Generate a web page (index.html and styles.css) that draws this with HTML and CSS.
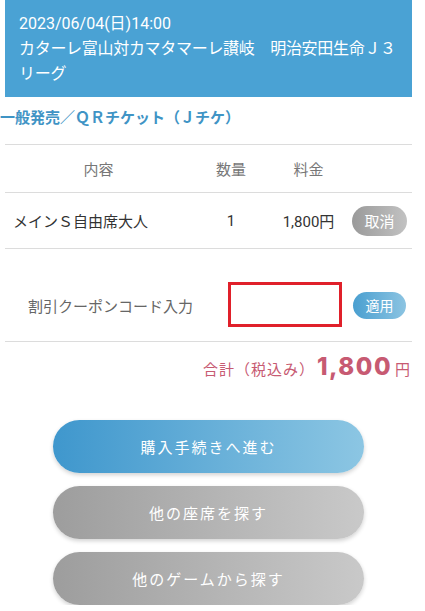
FILE: index.html
```html
<!DOCTYPE html>
<html lang="ja">
<head>
<meta charset="utf-8">
<link rel="stylesheet" href="styles.css">
</head>
<body>
<div class="page">
  <header class="event">
    <div class="event-date">2023/06/04(日)14:00</div>
    <div class="event-title">カターレ富山対カマタマーレ讃岐　明治安田生命Ｊ３リーグ</div>
  </header>
  <h2 class="sale">一般発売／ＱＲチケット（Ｊチケ）</h2>
  <div class="table">
    <div class="row head">
      <div class="c-name">内容</div>
      <div class="c-qty">数量</div>
      <div class="c-price">料金</div>
      <div class="c-act"></div>
    </div>
    <div class="row item">
      <div class="c-name left">メインＳ自由席大人</div>
      <div class="c-qty">1</div>
      <div class="c-price">1,800円</div>
      <div class="c-act"><span class="pill gray">取消</span></div>
    </div>
    <div class="row coupon">
      <div class="coupon-label">割引クーポンコード入力</div>
      <div class="coupon-input"></div>
      <span class="pill blue">適用</span>
    </div>
  </div>
  <div class="total">
    <span class="total-label">合計（税込み）</span><span class="total-num">1,800</span><span class="total-yen">円</span>
  </div>
  <div class="actions">
    <button class="btn primary">購入手続きへ進む</button>
    <button class="btn secondary">他の座席を探す</button>
    <button class="btn secondary">他のゲームから探す</button>
  </div>
</div>
</body>
</html>
```
FILE: styles.css
```css
* { box-sizing: border-box; }
html, body { margin: 0; padding: 0; background: #fff; }
body {
  font-family: Roboto, "Noto Sans CJK JP", sans-serif;
  color: #333;
}
.page { width: 425px; }
.event {
  margin-left: 5px;
  width: 407px;
  height: 97px;
  background: #4aa2d4;
  color: #fff;
  padding: 11px 4px 0 14px;
  font-size: 16px;
  line-height: 25px;
}
.event-title { letter-spacing: -0.3px; }
.sale {
  margin: 0;
  padding: 9px 0 0 0;
  height: 47px;
  font-size: 15px;
  line-height: 24px;
  color: #3f94c5;
  font-weight: bold;
}
.table {
  margin-left: 5px;
  width: 407px;
}
.row {
  display: flex;
  align-items: center;
  border-top: 1px solid #dcdcdc;
}
.row.head { height: 48px; color: #777; font-size: 15px; }
.row.item { height: 56px; font-size: 15px; color: #333; }
.row.coupon {
  height: 94px;
  border-bottom: 1px solid #dcdcdc;
  padding-top: 20px;
}
.c-name { width: 187px; text-align: center; }
.c-name.left { text-align: left; padding-left: 8px; letter-spacing: 0; }
.c-qty { width: 78px; text-align: center; }
.c-price { width: 77px; text-align: center; }
.c-act { flex: 1; display: flex; justify-content: flex-start; padding-left: 5px; }
.pill {
  display: inline-flex;
  align-items: center;
  justify-content: center;
  color: #fff;
  border-radius: 16px;
}
.pill.gray {
  width: 55px;
  height: 30px;
  font-size: 15px;
  background: linear-gradient(90deg, #9a9a9a, #c2c2c2);
}
.pill.blue {
  width: 53px;
  height: 27px;
  font-size: 14px;
  margin-left: 11px;
  background: linear-gradient(90deg, #4a9fd0, #8cc4e2);
}
.coupon-label {
  width: 223px;
  padding-left: 23px;
  font-size: 15px;
  color: #666;
  letter-spacing: 0;
}
.coupon-input {
  width: 114px;
  height: 45px;
  border: 3px solid #e0202a;
  margin-top: -2px;
}
.total {
  display: flex;
  justify-content: flex-end;
  align-items: baseline;
  padding: 10px 15px 0 0;
  height: 78px;
  color: #c75a72;
}
.total-label { font-size: 15px; letter-spacing: 1px; }
.total-num {
  font-family: Inter, "Open Sans", sans-serif;
  font-weight: 800;
  font-size: 24px;
  letter-spacing: 1.5px;
  margin: 0 3px 0 2px;
}
.total-yen { font-size: 15px; }
.actions {
  display: flex;
  flex-direction: column;
  align-items: flex-start;
  gap: 13px;
  padding-left: 53px;
}
.btn {
  width: 311px;
  height: 53px;
  border: none;
  border-radius: 27px;
  color: #fff;
  font-family: Roboto, "Noto Sans CJK JP", sans-serif;
  font-size: 15px;
  letter-spacing: 2px;
  box-shadow: 0 2px 4px rgba(0,0,0,0.18);
  padding: 0;
}
.btn.primary { background: linear-gradient(90deg, #3f97cd, #8cc6e3); }
.btn.secondary { background: linear-gradient(90deg, #9d9d9d, #c9c9c9); }
```
